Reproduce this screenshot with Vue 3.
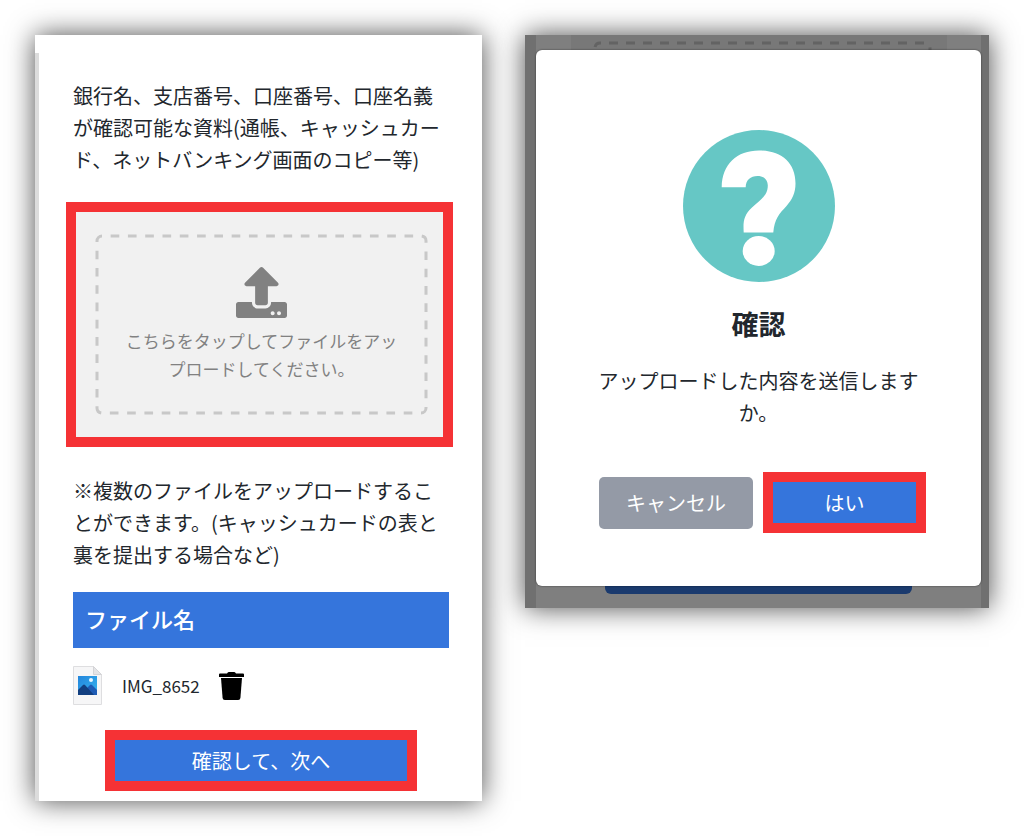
<script setup>
import { ref } from 'vue'

const files = ref([{ name: 'IMG_8652' }])
</script>

<template>
  <main class="page">
    <section class="panel upload-panel">
      <p class="lead">銀行名、支店番号、口座番号、口座名義が確認可能な資料(通帳、キャッシュカード、ネットバンキング画面のコピー等)</p>

      <button type="button" class="dropzone">
        <span class="drop-inner">
          <svg class="dashes" aria-hidden="true">
            <rect x="2" y="2" rx="5" pathLength="1160" />
          </svg>
          <svg class="upload-icon" viewBox="0 0 512 512" aria-hidden="true">
            <path d="M296 384h-80c-13.3 0-24-10.7-24-24V192h-87.7c-17.8 0-26.7-21.5-14.1-34.1L242.3 5.7c7.5-7.5 19.8-7.5 27.3 0l152.2 152.2c12.6 12.6 3.7 34.1-14.1 34.1H320v168c0 13.3-10.7 24-24 24zm216-8v112c0 13.3-10.7 24-24 24H24c-13.3 0-24-10.7-24-24V376c0-13.3 10.7-24 24-24h136v8c0 30.9 25.1 56 56 56h80c30.9 0 56-25.1 56-56v-8h136c13.3 0 24 10.7 24 24zm-124 88c0-11-9-20-20-20s-20 9-20 20 9 20 20 20 20-9 20-20zm64 0c0-11-9-20-20-20s-20 9-20 20 9 20 20 20 20-9 20-20z" />
          </svg>
          <span class="drop-text">こちらをタップしてファイルをアップロードしてください。</span>
        </span>
      </button>

      <p class="note">※複数のファイルをアップロードすることができます。(キャッシュカードの表と裏を提出する場合など)</p>

      <table class="files">
        <thead>
          <tr><th scope="col">ファイル名</th></tr>
        </thead>
        <tbody>
          <tr v-for="file in files" :key="file.name">
            <td>
              <div class="file-row">
                <svg class="file-icon" viewBox="0 0 29 39" aria-hidden="true">
                  <defs>
                    <linearGradient id="sky" x1="0" y1="0" x2="1" y2="1">
                      <stop offset="0" stop-color="#2385dc" />
                      <stop offset="1" stop-color="#35b4ee" />
                    </linearGradient>
                  </defs>
                  <path d="M.5.5h20l8 8v30H.5z" fill="#f6f6f7" stroke="#dedee0" />
                  <path d="M20.500.5v8h8z" fill="#e4e4e6" stroke="#d4d4d7" />
                  <rect x="5" y="10" width="19" height="19" fill="url(#sky)" />
                  <path d="M13 23l4-4q1-1 2 0l5 5v5h-9z" fill="#1e5bb4" />
                  <path d="M5 24l5-5q1-1 2 0l9 10H5z" fill="#123f80" />
                  <circle cx="18" cy="14" r="2" fill="#e8f7ff" />
                </svg>
                <span class="file-name">{{ file.name }}</span>
                <button type="button" class="trash" aria-label="削除">
                  <svg viewBox="0 0 25 28" aria-hidden="true">
                    <path d="M1 1.500h7L9 .3Q9.300 0 10 0h5q.7 0 1 .3l1 1.200h7q1 0 1 1V5H0V2.500q0-1 1-1z" />
                    <path d="M2 6h21l-1.600 20q-.2 2-2.200 2H5.800q-2 0-2.200-2z" />
                  </svg>
                </button>
              </div>
            </td>
          </tr>
        </tbody>
      </table>

      <button type="button" class="primary next">確認して、次へ</button>
    </section>

    <section class="panel confirm-panel">
      <div class="behind" aria-hidden="true">
        <div class="behind-zone">
          <svg class="behind-dashes"><rect x="2" y="2" rx="5" height="60" /></svg>
        </div>
        <div class="behind-button"></div>
      </div>
      <div class="dialog" role="dialog" aria-labelledby="confirm-title">
        <svg class="question" viewBox="0 0 152 152" aria-hidden="true">
          <circle cx="76" cy="76" r="76" fill="#66c7c5" />
          <path d="M38.700 57.200C39 34 54 20.500 76 20.500c22 0 36.500 12 36.500 33 0 10-3.500 16-9 22.500C96 84 91.500 89 90.300 102.500H60.700C60 91 61 85 69 77.500 77 70 84.800 66 84.800 55.500c0-6-4.300-9.500-10.300-9.500-7 0-11.800 4-11.800 11.200z" fill="#fff" />
          <ellipse cx="75.700" cy="121" rx="16" ry="15" fill="#fff" />
        </svg>
        <h2 id="confirm-title">確認</h2>
        <p class="message">アップロードした内容を送信しますか。</p>
        <div class="actions">
          <button type="button" class="cancel">キャンセル</button>
          <button type="button" class="primary yes">はい</button>
        </div>
      </div>
    </section>
  </main>
</template>

<style>
body {
  margin: 0;
  background: #fff;
}
</style>

<style scoped>
.page {
  display: grid;
  grid-template-columns: minmax(0, 447fr) minmax(0, 464fr);
  align-items: start;
  gap: 43px;
  padding: 35px;
  font-family: "Noto Sans CJK JP", "Noto Sans", sans-serif;
  font-size: 20px;
  line-height: 32px;
  color: #22272d;
}

.page * {
  box-sizing: border-box;
}

button {
  font: inherit;
  margin: 0;
  padding: 0;
  cursor: pointer;
}

p,
h2 {
  margin: 0;
}

.panel {
  position: relative;
  box-shadow: 0 0 26px rgba(0, 0, 0, 0.7);
}

.upload-panel {
  padding: 45px 33px 10px 38px;
  background: #fff;
}

.upload-panel::before {
  content: "";
  position: absolute;
  left: 0;
  top: 18px;
  bottom: 0;
  width: 4px;
  background: #dcdcdc;
}

.dropzone {
  display: block;
  width: calc(100% + 11px);
  margin: 26px -4px 28px -7px;
  padding: 22px 15px 22px 19px;
  border: 10px solid #f53235;
  background: #f1f1f1;
  color: #818181;
}

.drop-inner {
  position: relative;
  display: flex;
  flex-direction: column;
  align-items: center;
  padding: 33px 27px 32px;
}

.dashes {
  position: absolute;
  inset: 0;
  width: 100%;
  height: 100%;
}

.dashes rect {
  width: calc(100% - 4px);
  height: calc(100% - 4px);
  fill: none;
  stroke: #c8c8c8;
  stroke-width: 3px;
  stroke-dasharray: 10 10;
  stroke-dashoffset: -10;
}

.upload-icon {
  width: 51px;
  height: 51px;
  margin-bottom: 9px;
  fill: #818181;
}

.drop-text {
  font-size: 17px;
  line-height: 28px;
}

.files {
  width: 100%;
  margin-top: 21px;
  border-collapse: collapse;
}

.files th {
  height: 56px;
  padding: 0 12px 4px;
  background: #3575dc;
  color: #fff;
  font-size: 22px;
  font-weight: 500;
  text-align: left;
}

.files td {
  padding: 18px 0 25px;
}

.file-row {
  display: flex;
  align-items: center;
}

.file-icon {
  width: 29px;
  height: 39px;
}

.file-name {
  margin: 0 19px 0 20px;
  font-size: 17px;
}

.trash {
  display: flex;
  border: 0;
  background: none;
}

.trash svg {
  width: 25px;
  height: 28px;
}

.primary {
  border: 10px solid #f53235;
  background: #3575dc;
  color: #fff;
  height: 61px;
}

.next {
  display: block;
  width: 83%;
  margin: 0 auto;
}

.confirm-panel {
  padding: 15px 8px 22px 11px;
  background: #707070;
}

.behind {
  position: absolute;
  inset: 0 8px 0 11px;
  background: #7f7f7f;
}

.behind-zone {
  height: 60px;
  margin: 0 34px 0 35px;
  background: #787878;
  overflow: hidden;
}

.behind-dashes {
  display: block;
  width: calc(100% - 37px);
  height: 52px;
  margin: 6px 15px 0 22px;
}

.behind-dashes rect {
  width: calc(100% - 4px);
  fill: none;
  stroke: #636363;
  stroke-width: 3px;
  stroke-dasharray: 9 8;
  stroke-dashoffset: -9;
}

.behind-button {
  position: absolute;
  left: 69px;
  right: 69px;
  bottom: 14px;
  height: 40px;
  border-radius: 6px;
  background: #1a3a6e;
}

.dialog {
  position: relative;
  display: flex;
  flex-direction: column;
  align-items: center;
  padding: 80px 62px 53px;
  border-radius: 6px;
  background: #fff;
  box-shadow: 0 0 2px rgba(0, 0, 0, 0.6);
}

.question {
  width: 152px;
  height: 152px;
}

.dialog h2 {
  margin-top: 22px;
  font-size: 27px;
  line-height: 40px;
  font-weight: 700;
}

.message {
  margin-top: 21px;
  text-align: center;
}

.actions {
  display: grid;
  grid-template-columns: minmax(0, 154fr) minmax(0, 163fr);
  align-items: center;
  align-self: stretch;
  gap: 10px;
  margin: 43px -7px 0 1px;
}

.cancel {
  height: 52px;
  border: 0;
  border-radius: 5px;
  background: #949aa6;
  color: #fff;
}
</style>
